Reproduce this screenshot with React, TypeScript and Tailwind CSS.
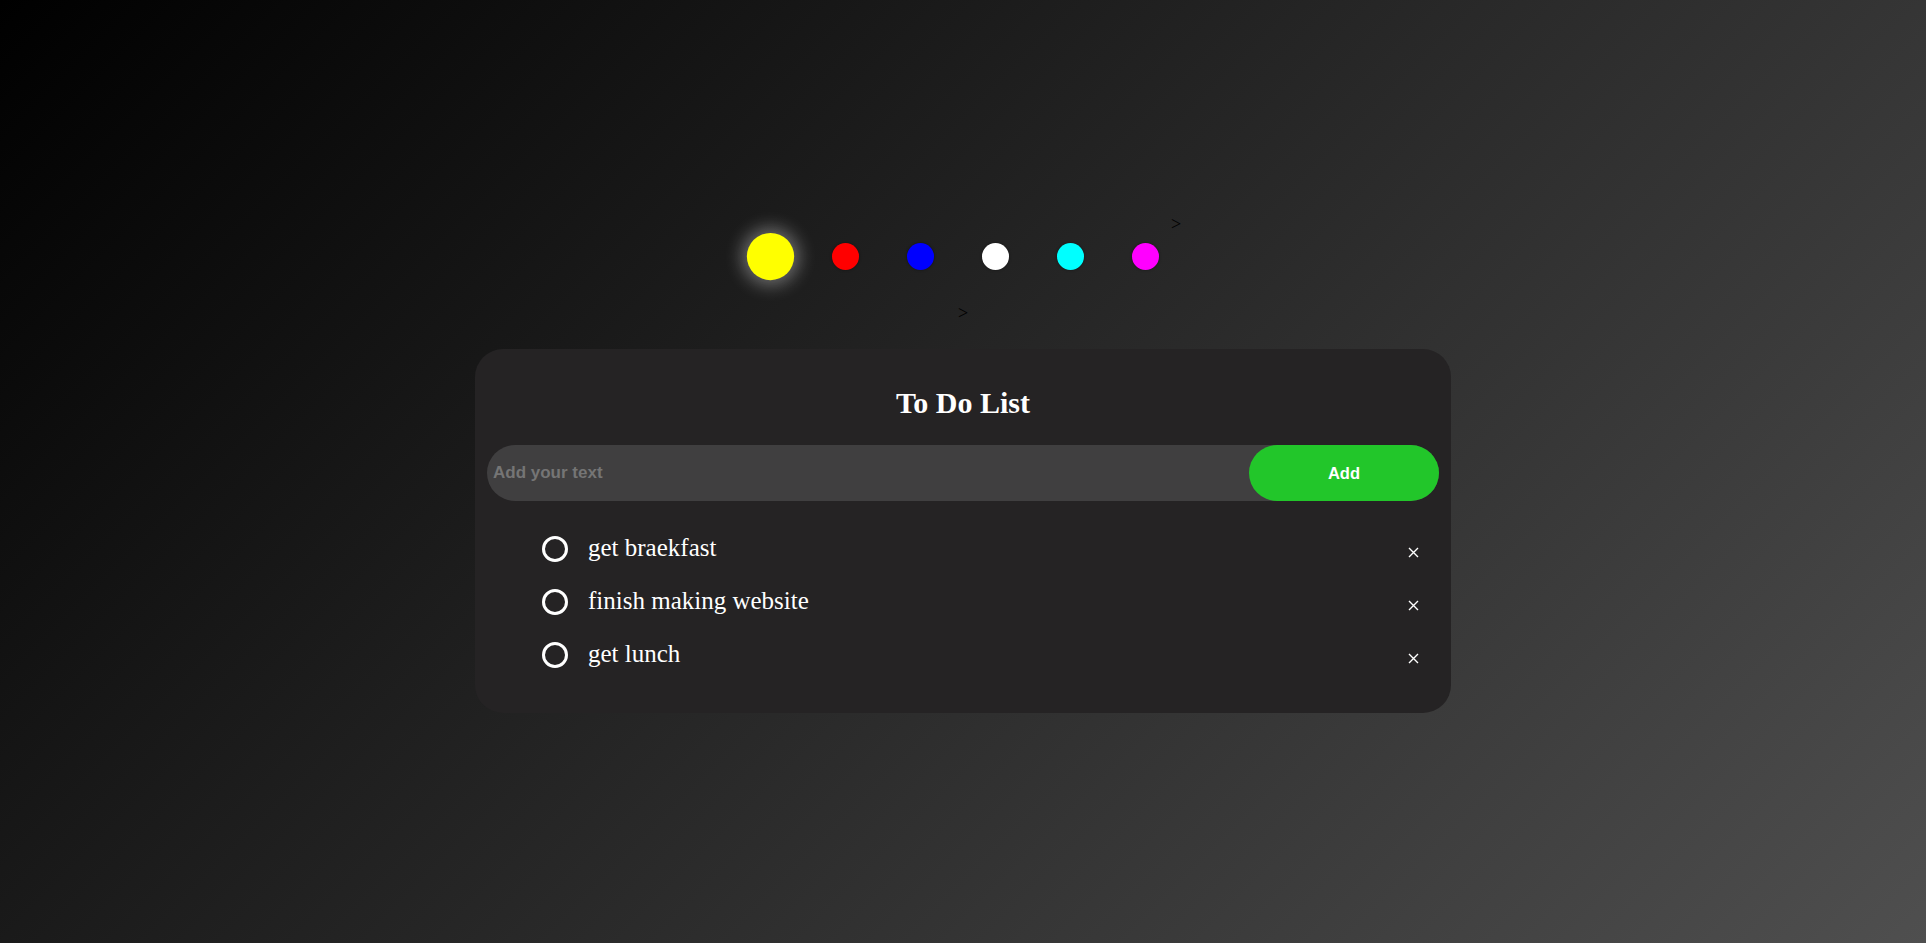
import React, { useState } from 'react';

interface Todo {
  id: number;
  text: string;
  done: boolean;
}

const dotColors = ['bg-[#ffff00]', 'bg-[#ff0000]', 'bg-[#0000ff]', 'bg-[#ffffff]', 'bg-[#00ffff]', 'bg-[#ff00ff]'];

const App: React.FC = () => {
  const [active, setActive] = useState(0);
  const [text, setText] = useState('');
  const [todos, setTodos] = useState<Todo[]>([
    { id: 1, text: 'get braekfast', done: false },
    { id: 2, text: 'finish making website', done: false },
    { id: 3, text: 'get lunch', done: false },
  ]);

  const addTodo = () => {
    if (!text.trim()) return;
    setTodos([...todos, { id: Date.now(), text: text.trim(), done: false }]);
    setText('');
  };

  const toggle = (id: number) => {
    setTodos(todos.map(t => (t.id === id ? { ...t, done: !t.done } : t)));
  };

  const remove = (id: number) => {
    setTodos(todos.filter(t => t.id !== id));
  };

  return (
    <div className="min-h-screen w-full bg-[linear-gradient(135deg,#000000,#4f4f4f)] flex flex-col items-center pt-[233px] font-['Liberation_Serif',serif]">
      {/* colour picker */}
      <div className="flex items-center h-[47px] pl-[2px] pr-[14px]">
        {dotColors.map((c, i) => (
          <button
            key={c}
            onClick={() => setActive(i)}
            className={`w-[27px] h-[27px] rounded-full mx-[24px] ${c} ${
              active === i ? 'scale-[1.75] shadow-[0_0_10px_3px_rgba(255,255,255,0.35)]' : 'shadow-[0_0_3px_rgba(0,0,0,0.4)]'
            }`}
          />
        ))}
        <span className="self-start -mt-[18px] -ml-[12px] text-[18px] leading-[18px] text-black">&gt;</span>
      </div>
      <span className="mt-[24px] text-[18px] leading-[18px] text-black">&gt;</span>

      {/* card */}
      <div className="mt-[27px] w-[976px] rounded-[28px] bg-[#252324] px-3 pt-[37px] pb-[31px]">
        <h1 className="text-center text-white font-bold text-[30px] leading-[34px]">To Do List</h1>

        <div className="mt-[25px] flex h-[56px] rounded-full bg-[#403f40]">
          <input
            value={text}
            onChange={e => setText(e.target.value)}
            placeholder="Add your text"
            className="flex-1 bg-transparent pl-[6px] outline-none text-white font-bold text-[17px] placeholder:text-[#757575] font-['Liberation_Sans',Arial,sans-serif]"
          />
          <button
            onClick={addTodo}
            className="w-[190px] h-full rounded-full bg-[#22c62a] text-white font-bold text-[16.5px] font-['Liberation_Sans',Arial,sans-serif]"
          >
            Add
          </button>
        </div>

        <ul className="mt-[21.5px]">
          {todos.map(todo => (
            <li key={todo.id} className="flex items-center h-[53px] pl-[55px] pr-[20px]">
              <button
                onClick={() => toggle(todo.id)}
                className={`w-[26px] h-[26px] rounded-full border-[3px] border-white shrink-0 ${todo.done ? 'bg-white' : ''}`}
              />
              <span className={`ml-[20px] flex-1 text-white text-[25px] leading-[28px] -mt-[3px] ${todo.done ? 'line-through opacity-60' : ''}`}>
                {todo.text}
              </span>
              <button onClick={() => remove(todo.id)} className="mt-[6px] w-[12px] h-[12px] flex items-center justify-center">
                <svg width="11" height="11" viewBox="0 0 11 11">
                  <path d="M1 1L10 10M10 1L1 10" stroke="white" strokeWidth="1.4" />
                </svg>
              </button>
            </li>
          ))}
        </ul>
      </div>
    </div>
  );
};

export default App;
